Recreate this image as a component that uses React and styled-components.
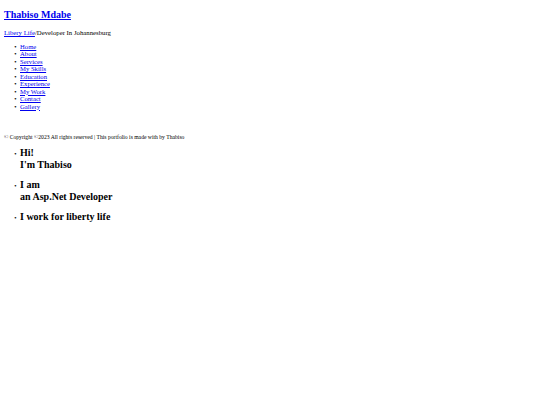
import React from "react";
import styled, { createGlobalStyle } from "styled-components";

const Global = createGlobalStyle`
  html, body { margin: 0; padding: 0; background: #fff; }
  body {
    font-family: "Liberation Serif", "Times New Roman", serif;
    color: #000;
    font-size: 6.67px;
  }
`;

const Page = styled.div`
  padding: 0 4px;
  display: flex;
  flex-direction: column;
`;

const Link = styled.a`
  color: #0000ee;
  text-decoration: underline;
`;

const Title = styled.h1`
  margin: 9px 0 0;
  font-size: 10px;
  line-height: 11.5px;
  font-weight: bold;
`;

const Tagline = styled.p`
  margin: 8.5px 0 0;
  font-size: 6.75px;
  line-height: 7.67px;
`;

const List = styled.ul`
  margin: ${(p) => p.$top}px 0 0;
  padding-left: 16px;
  list-style: disc;
`;

const NavItem = styled.li`
  font-size: 6.67px;
  line-height: 7.5px;
  &::marker {
    content: "\\2022\\2002";
    font-size: 6.67px;
  }
`;

const Copyright = styled.p`
  margin: 24px 0 0;
  font-size: 5.65px;
  line-height: 6.4px;
`;

const IntroItem = styled.li`
  font-size: 6.67px;
  margin-bottom: 9px;
  &::marker {
    content: "\\2022\\2002";
    font-size: 6.67px;
  }
`;

const IntroHeading = styled.h3`
  margin: 0;
  font-size: 10px;
  line-height: 11.5px;
  font-weight: bold;
`;

const navLinks = [
  "Home",
  "About",
  "Services",
  "My Skills",
  "Education",
  "Experience",
  "My Work",
  "Contact",
  "Gallery",
];

const intro = [
  ["Hi!", "I'm Thabiso"],
  ["I am", "an Asp.Net Developer"],
  ["I work for liberty life"],
];

export default function App() {
  return (
    <>
      <Global />
      <Page>
        <Title>
          <Link href="#">Thabiso Mdabe</Link>
        </Title>
        <Tagline>
          <Link href="#">Libery Life</Link>/Developer In Johannesburg
        </Tagline>
        <List $top={6}>
          {navLinks.map((l) => (
            <NavItem key={l}>
              <Link href="#">{l}</Link>
            </NavItem>
          ))}
        </List>
        <Copyright>
          © Copyright ©2023 All rights reserved | This portfolio is made with by Thabiso
        </Copyright>
        <List $top={6.5}>
          {intro.map((lines, i) => (
            <IntroItem key={i}>
              <IntroHeading>
                {lines.map((t, j) => (
                  <React.Fragment key={j}>
                    {j > 0 && <br />}
                    {t}
                  </React.Fragment>
                ))}
              </IntroHeading>
            </IntroItem>
          ))}
        </List>
      </Page>
    </>
  );
}
